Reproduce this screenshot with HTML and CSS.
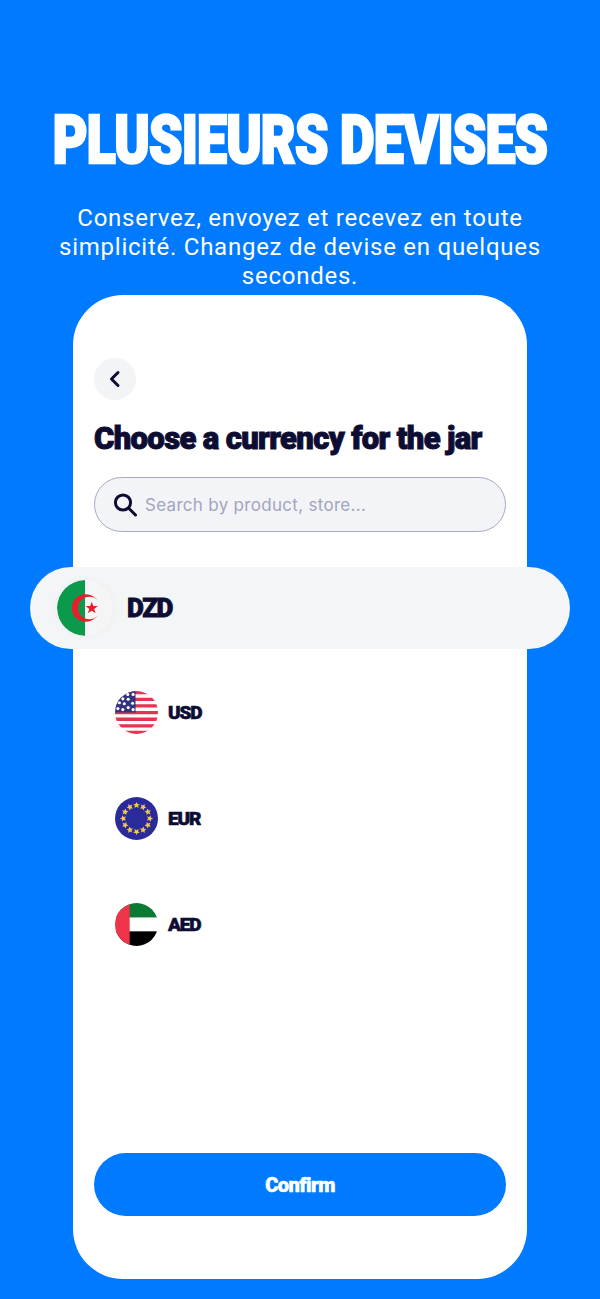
FILE: index.html
```html
<!DOCTYPE html>
<html lang="fr">
<head>
  <meta charset="UTF-8">
  <meta name="viewport" content="width=device-width, initial-scale=1">
  <title>Plusieurs devises</title>
  <link rel="stylesheet" href="styles.css">
</head>
<body>
  <h1 class="headline">PLUSIEURS DEVISES</h1>
  <p class="subtitle">Conservez, envoyez et recevez en toute simplicité. Changez de devise en quelques secondes.</p>

  <div class="card">
    <button class="back-btn" aria-label="Retour">
      <svg width="14" height="18" viewBox="0 0 14 18"><path d="M10 2.5 3.5 9l6.5 6.5" fill="none" stroke="#0d0d33" stroke-width="3" stroke-linecap="round" stroke-linejoin="round"/></svg>
    </button>
    <h2 class="title">Choose a currency for the jar</h2>

    <div class="search">
      <svg width="26" height="26" viewBox="0 0 26 26"><circle cx="10" cy="10.5" r="7.6" fill="none" stroke="#0d0d33" stroke-width="3"/><path d="M16 16.5l6.5 6.5" stroke="#0d0d33" stroke-width="3" stroke-linecap="round"/></svg>
      <span class="placeholder">Search by product, store...</span>
    </div>

    <div class="currency currency-active">
      <svg class="flag flag-big" viewBox="0 0 44 44">
        <defs>
          <clipPath id="c1"><circle cx="22" cy="22" r="22"/></clipPath>
          <mask id="crescent">
            <rect width="44" height="44" fill="#fff"/>
            <circle cx="25.4" cy="22" r="8.8" fill="#000"/>
          </mask>
        </defs>
        <g clip-path="url(#c1)">
          <rect width="44" height="44" fill="#f5f5f6"/>
          <rect width="22" height="44" fill="#0b9a4b"/>
          <circle cx="22.5" cy="22" r="10.9" fill="#e5202e" mask="url(#crescent)"/>
          <polygon points="27.3,17 28.5,20.4 32.1,20.5 29.2,22.7 30.3,26.2 27.3,24.1 24.3,26.2 25.4,22.7 22.5,20.5 26.1,20.4" fill="#e5202e"/>
        </g>
      </svg>
      <span class="code code-big">DZD</span>
    </div>

    <div class="currency">
      <svg class="flag" viewBox="0 0 44 44">
        <defs><clipPath id="c2"><circle cx="22" cy="22" r="22"/></clipPath></defs>
        <g clip-path="url(#c2)">
          <rect width="44" height="44" fill="#fff"/>
          <path d="M0 1.7h44M0 8.5h44M0 15.3h44M0 22.1h44M0 28.9h44M0 35.7h44M0 42.5h44" stroke="#e2354f" stroke-width="3.4"/>
          <rect width="21" height="22" fill="#33337f"/>
          <g fill="#fff">
            <circle cx="13" cy="3.5" r="1.6"/><circle cx="18.5" cy="3.5" r="1.6"/>
            <circle cx="8" cy="8" r="1.6"/><circle cx="13.5" cy="8.5" r="1.6"/>
            <circle cx="4.5" cy="12" r="1.6"/><circle cx="9.5" cy="13" r="1.6"/><circle cx="18" cy="12.5" r="1.6"/>
            <circle cx="13.5" cy="17" r="1.6"/><circle cx="3" cy="18" r="1.6"/><circle cx="8" cy="19" r="1.6"/><circle cx="18.5" cy="19" r="1.6"/>
          </g>
        </g>
      </svg>
      <span class="code">USD</span>
    </div>

    <div class="currency">
      <svg class="flag" viewBox="0 0 44 44">
        <defs><polygon id="eu-star" points="22,5 23,7.2 25.3,7.4 23.6,9 24.1,11.3 22,10.1 19.9,11.3 20.4,9 18.7,7.4 21,7.2" fill="#f3c94b"/></defs>
        <circle cx="22" cy="22" r="22" fill="#2a2a9c"/>
        <use href="#eu-star"/>
        <use href="#eu-star" transform="rotate(30 22 22)"/>
        <use href="#eu-star" transform="rotate(60 22 22)"/>
        <use href="#eu-star" transform="rotate(90 22 22)"/>
        <use href="#eu-star" transform="rotate(120 22 22)"/>
        <use href="#eu-star" transform="rotate(150 22 22)"/>
        <use href="#eu-star" transform="rotate(180 22 22)"/>
        <use href="#eu-star" transform="rotate(210 22 22)"/>
        <use href="#eu-star" transform="rotate(240 22 22)"/>
        <use href="#eu-star" transform="rotate(270 22 22)"/>
        <use href="#eu-star" transform="rotate(300 22 22)"/>
        <use href="#eu-star" transform="rotate(330 22 22)"/>
      </svg>
      <span class="code">EUR</span>
    </div>

    <div class="currency">
      <svg class="flag" viewBox="0 0 44 44">
        <defs><clipPath id="c4"><circle cx="22" cy="22" r="22"/></clipPath></defs>
        <g clip-path="url(#c4)">
          <rect width="44" height="15" fill="#0a7a34"/>
          <rect y="15" width="44" height="14" fill="#fff"/>
          <rect y="29" width="44" height="15" fill="#000"/>
          <rect width="15" height="44" fill="#ef3349"/>
        </g>
      </svg>
      <span class="code">AED</span>
    </div>

    <button class="confirm">Confirm</button>
  </div>
</body>
</html>
```

FILE: styles.css
```css
html, body {
  height: 100%;
  margin: 0;
  padding: 0;
}

body {
  background: #007aff;
  font-family: "Roboto", "Liberation Sans", sans-serif;
  display: flex;
  flex-direction: column;
  align-items: center;
  overflow: hidden;
  box-sizing: border-box;
  padding-top: 99px;
}

/* the original face is condensed, so Roboto Black gets squeezed */
.headline {
  width: 498px;
  margin: 0;
  color: #fff;
  font-size: 66px;
  font-weight: 900;
  line-height: 84px;
  letter-spacing: -1px;
  -webkit-text-stroke: 2.6px #fff;
  white-space: nowrap;
  display: flex;
  justify-content: center;
  transform: scaleX(0.81);
}

.subtitle {
  width: 500px;
  margin: 21px 0 0;
  color: #fff;
  font-size: 24px;
  line-height: 29px;
  letter-spacing: 0.75px;
  text-align: center;
}

.card {
  width: 454px;
  height: 984px;
  margin-top: 4px;
  padding: 63px 21px 0;
  box-sizing: border-box;
  background: #fff;
  border-radius: 50px;
  display: flex;
  flex-direction: column;
}

.back-btn {
  width: 42px;
  height: 42px;
  padding: 0;
  border: none;
  border-radius: 50%;
  background: #f3f4f6;
  display: flex;
  align-items: center;
  justify-content: center;
}

.title {
  margin: 19px 0 0;
  color: #0d0d33;
  font-size: 31px;
  font-weight: 900;
  line-height: 40px;
  letter-spacing: -0.63px;
  -webkit-text-stroke: 1px #0d0d33;
  white-space: nowrap;
}

.search {
  height: 55px;
  margin-top: 18px;
  padding-left: 18px;
  box-sizing: border-box;
  border: 1.5px solid #a6a8c2;
  border-radius: 28px;
  background: #f3f4f8;
  display: flex;
  align-items: center;
  gap: 6px;
}

.placeholder {
  color: #a2a5bd;
  font-family: "Inter", sans-serif;
  font-size: 17px;
  letter-spacing: 0.3px;
}

.currency {
  height: 106px;
  padding-left: 21px;
  display: flex;
  align-items: center;
  gap: 10px;
}

.currency-active {
  height: 82px;
  margin: 35px -64px 10px;
  padding-left: 27px;
  border-radius: 41px;
  background: #f4f5f6;
  gap: 14px;
}

.flag {
  width: 43px;
  height: 43px;
  flex-shrink: 0;
}

.flag-big {
  width: 56px;
  height: 56px;
  border-radius: 50%;
  box-shadow: 0 0 10px rgba(0, 0, 0, 0.04);
}

.code {
  color: #0d0d33;
  font-size: 19px;
  font-weight: 900;
  letter-spacing: -1.1px;
  -webkit-text-stroke: 0.6px #0d0d33;
}

.code-big {
  font-size: 26px;
  letter-spacing: -1.4px;
  -webkit-text-stroke: 0.8px #0d0d33;
}

.confirm {
  height: 63px;
  margin-top: 176px;
  border: none;
  border-radius: 32px;
  background: #007aff;
  color: #fff;
  font-family: inherit;
  font-size: 20px;
  font-weight: 900;
  letter-spacing: -0.5px;
  -webkit-text-stroke: 0.5px #fff;
}
```
